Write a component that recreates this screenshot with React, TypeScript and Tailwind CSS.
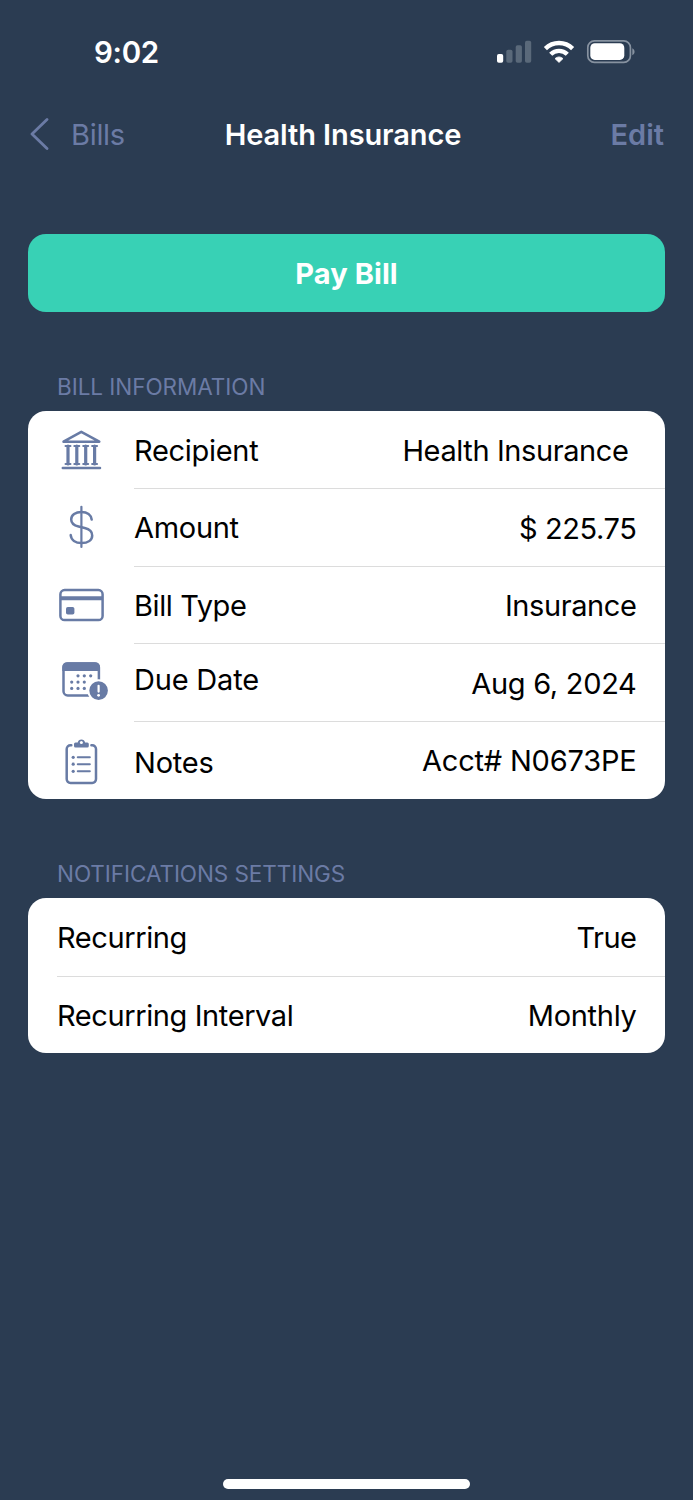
import { ReactNode } from 'react'

function StatusIcons() {
  return (
    <svg className="h-6 w-[139px]" fill="none" viewBox="0 0 139 24">
      <rect fill="#fff" height="8.7" rx="1.8" width="6.2" x="1" y="14" />
      <g fill="#5a697a">
        <rect height="13" rx="1.8" width="6.2" x="10.3" y="9.7" />
        <rect height="17.5" rx="1.8" width="6.2" x="19.7" y="5.2" />
        <rect height="22" rx="1.8" width="6.2" x="29" y="0.7" />
      </g>
      <g stroke="#fff" strokeWidth="4.4">
        <path d="M49.4 8.6a19.4 19.4 0 0 1 27.2 0" />
        <path d="M54.7 14.3a11.8 11.8 0 0 1 16.6 0" />
      </g>
      <path
        d="M59 18.6a6.2 6.2 0 0 1 8 0L63 22.4z"
        fill="#fff"
        stroke="#fff"
        strokeLinejoin="round"
        strokeWidth="0.8"
      />
      <rect
        height="21.4"
        rx="6.6"
        stroke="#8792a0"
        strokeWidth="1.7"
        width="42.6"
        x="91.8"
        y="0.9"
      />
      <rect fill="#fff" height="16.6" rx="4.4" width="34" x="94.3" y="3.3" />
      <path d="M136.3 8.2c3 1.4 3 5.6 0 7z" fill="#8792a0" />
    </svg>
  )
}

function RowIcon({ children }: { children: ReactNode }) {
  return (
    <svg
      className="h-[77.5px] w-[52px] shrink-0"
      fill="none"
      stroke="#687ba5"
      strokeLinecap="round"
      strokeLinejoin="round"
      strokeWidth="2.5"
      viewBox="0 0 52 77.5"
    >
      {children}
    </svg>
  )
}

const BankIcon = () => (
  <RowIcon>
    <path d="M6.5 30.7 24.3 20.8 42.3 30.7zM5.8 57H43" />
    {[11, 19.8, 28.7, 37.6].map((x) => (
      <g key={x}>
        <path d={`M${x} 35V53`} strokeWidth="3.2" />
        <path
          d={`M${x - 2.4} 35h4.8M${x - 2.4} 53h4.8`}
          strokeWidth="2.2"
        />
      </g>
    ))}
  </RowIcon>
)

const DollarIcon = () => (
  <RowIcon>
    <path d="M34.7 31.6C34.2 26.8 30.2 23.9 24.5 23.9 18.5 23.9 14.2 27.1 14.2 31.4c0 3.8 2.6 5.9 7.4 7.1l6.1 1.5c5 1.2 7.5 3.6 7.5 7.4 0 4.8-4.3 7.7-10.6 7.7S14.2 52 13.7 47.1" />
    <path d="M24.4 18.8v40.2" strokeWidth="2.2" />
  </RowIcon>
)

const CardIcon = () => (
  <RowIcon>
    <rect height="30" rx="4.2" width="42.2" x="3.4" y="24.1" />
    <path d="M3.4 32.3h42.2" strokeLinecap="butt" strokeWidth="4" />
    <rect
      fill="#687ba5"
      height="7.6"
      rx="1.8"
      stroke="none"
      width="8.4"
      x="9"
      y="41"
    />
  </RowIcon>
)

const dots = [
  [21, 32.8],
  [27.3, 32.8],
  [33.7, 32.8],
  [14.7, 39.1],
  [21, 39.1],
  [27.3, 39.1],
  [14.7, 45.4],
  [21, 45.4],
  [27.3, 45.4],
]

const CalendarIcon = () => (
  <RowIcon>
    <rect height="32" rx="4.2" width="35.4" x="6.5" y="20.4" />
    <path
      d="M5.3 28v-4.2a4.6 4.6 0 0 1 4.6-4.6h28.5a4.6 4.6 0 0 1 4.6 4.6V28z"
      fill="#687ba5"
      stroke="none"
    />
    {dots.map(([x, y]) => (
      <circle
        cx={x}
        cy={y}
        fill="#687ba5"
        key={`${x}-${y}`}
        r="1.6"
        stroke="none"
      />
    ))}
    <circle
      cx="41.6"
      cy="47.6"
      fill="#687ba5"
      r="10.3"
      stroke="#fff"
      strokeWidth="2"
    />
    <path d="M41.6 42.8v5.8" stroke="#fff" strokeWidth="2.2" />
    <circle cx="41.6" cy="52.3" fill="#fff" r="1.4" stroke="none" />
  </RowIcon>
)

const ClipboardIcon = () => (
  <RowIcon>
    <path d="M14.3 24.3h-.8a3.8 3.8 0 0 0-3.8 3.8v30a3.8 3.8 0 0 0 3.8 3.8h21.7a3.8 3.8 0 0 0 3.8-3.8v-30a3.8 3.8 0 0 0-3.8-3.8h-.8" />
    <path
      d="M18.5 21.4h2.2a3.8 3.8 0 0 1 7.4 0h2.2q1.5 0 1.5 1.5v2q0 1.5-1.5 1.5H18.5q-1.5 0-1.5-1.5v-2q0-1.5 1.5-1.5z"
      fill="#687ba5"
      stroke="none"
    />
    <circle cx="24.4" cy="21.6" fill="#fff" r="1.5" stroke="none" />
    {[36.3, 43.2, 50.3].map((y) => (
      <g key={y}>
        <circle cx="16.2" cy={y} fill="#687ba5" r="1.6" stroke="none" />
        <path d={`M20.8 ${y}h12`} strokeWidth="2.1" />
      </g>
    ))}
  </RowIcon>
)

const bill = [
  {
    icon: <BankIcon />,
    label: 'Recipient',
    labelClass: 'pt-[3px] tracking-[-0.3px]',
    value: 'Health Insurance',
    valueClass: 'pr-[36px] pt-[3px] tracking-[-0.4px]',
  },
  {
    icon: <DollarIcon />,
    label: 'Amount',
    labelClass: 'pt-[2px] tracking-[-0.3px]',
    value: '$ 225.75',
    valueClass: 'pr-7 pt-[3px] tracking-[-0.4px]',
  },
  {
    icon: <CardIcon />,
    label: 'Bill Type',
    labelClass: 'pt-[2px] tracking-[-0.4px]',
    value: 'Insurance',
    valueClass: 'pr-7 pt-[3px] tracking-[-0.4px]',
  },
  {
    icon: <CalendarIcon />,
    label: 'Due Date',
    labelClass: 'pb-[5px] tracking-[-0.2px]',
    value: 'Aug 6, 2024',
    valueClass: 'pr-7 pt-[3px] tracking-[-0.3px]',
  },
  {
    icon: <ClipboardIcon />,
    label: 'Notes',
    labelClass: 'pt-[6px] tracking-[-0.2px]',
    value: 'Acct# N0673PE',
    valueClass: 'pr-7 pt-[2px] tracking-[-0.2px]',
  },
]

const notifications = [
  {
    label: 'Recurring',
    labelClass: 'tracking-[-0.4px]',
    value: 'True',
    valueClass: 'tracking-[-0.5px]',
  },
  {
    label: 'Recurring Interval',
    labelClass: 'tracking-[-0.4px]',
    value: 'Monthly',
    valueClass: 'tracking-[-0.3px]',
  },
]

export default function App() {
  return (
    <div className="flex h-[1500px] w-[693px] flex-col bg-[#2b3c52] px-7 font-['Inter',sans-serif] text-[29px] leading-9 whitespace-nowrap">
      <header className="flex h-[104px] items-center justify-between pr-[30px] pl-[66px] text-white">
        <span className="text-[29.5px] font-semibold tracking-[-0.3px]">
          9:02
        </span>
        <StatusIcons />
      </header>
      <nav className="grid h-[60px] grid-cols-[1fr_auto_1fr] items-center text-[#6b7ba5]">
        <div className="flex items-center">
          <svg
            className="h-8 w-[43px]"
            fill="none"
            stroke="currentColor"
            strokeLinecap="round"
            strokeLinejoin="round"
            strokeWidth="2.8"
            viewBox="0 0 43 32"
          >
            <path d="M19 1.5 4 16l15 14.5" />
          </svg>
          <span className="pt-[2px] tracking-[-0.3px]">Bills</span>
        </div>
        <h1 className="pt-[2px] pr-[7px] font-semibold tracking-[-0.1px] text-white">
          Health Insurance
        </h1>
        <span className="pt-[2px] pr-px text-right font-semibold">Edit</span>
      </nav>
      <button className="mt-[70px] h-[77.5px] rounded-[18px] bg-[#38d1b5] pt-[2px] font-bold tracking-[0.1px] text-white">
        Pay Bill
      </button>
      <h2 className="mt-[60px] mb-[9px] h-[30px] pl-[29px] text-[22.5px] leading-[30px] tracking-[-0.05px] text-[#6b7ba5]">
        BILL INFORMATION
      </h2>
      <section className="w-[636.5px] rounded-[18px] bg-white pb-[0.5px] text-black">
        {bill.map((row, i) => (
          <div className="flex h-[77.5px] items-center pl-[29px]" key={row.label}>
            {row.icon}
            <div
              className={`ml-[25px] flex h-full flex-1 items-center justify-between ${i > 0 ? 'border-t border-[#dcdcdc]' : ''}`}
            >
              <span className={row.labelClass}>{row.label}</span>
              <span className={row.valueClass}>{row.value}</span>
            </div>
          </div>
        ))}
      </section>
      <h2 className="mt-[60.5px] mb-[9px] h-[30px] pl-[29px] text-[22.5px] leading-[30px] tracking-[-0.07px] text-[#6b7ba5]">
        NOTIFICATIONS SETTINGS
      </h2>
      <section className="w-[636.5px] rounded-[18px] bg-white pl-[29px] text-black">
        {notifications.map((row, i) => (
          <div
            className={`flex h-[77.5px] items-center justify-between pt-[2px] pr-7 ${i > 0 ? 'border-t border-[#dcdcdc]' : ''}`}
            key={row.label}
          >
            <span className={row.labelClass}>{row.label}</span>
            <span className={row.valueClass}>{row.value}</span>
          </div>
        ))}
      </section>
      <div className="mt-auto mb-[11px] h-[10px] w-[247px] self-center rounded-full bg-white" />
    </div>
  )
}
